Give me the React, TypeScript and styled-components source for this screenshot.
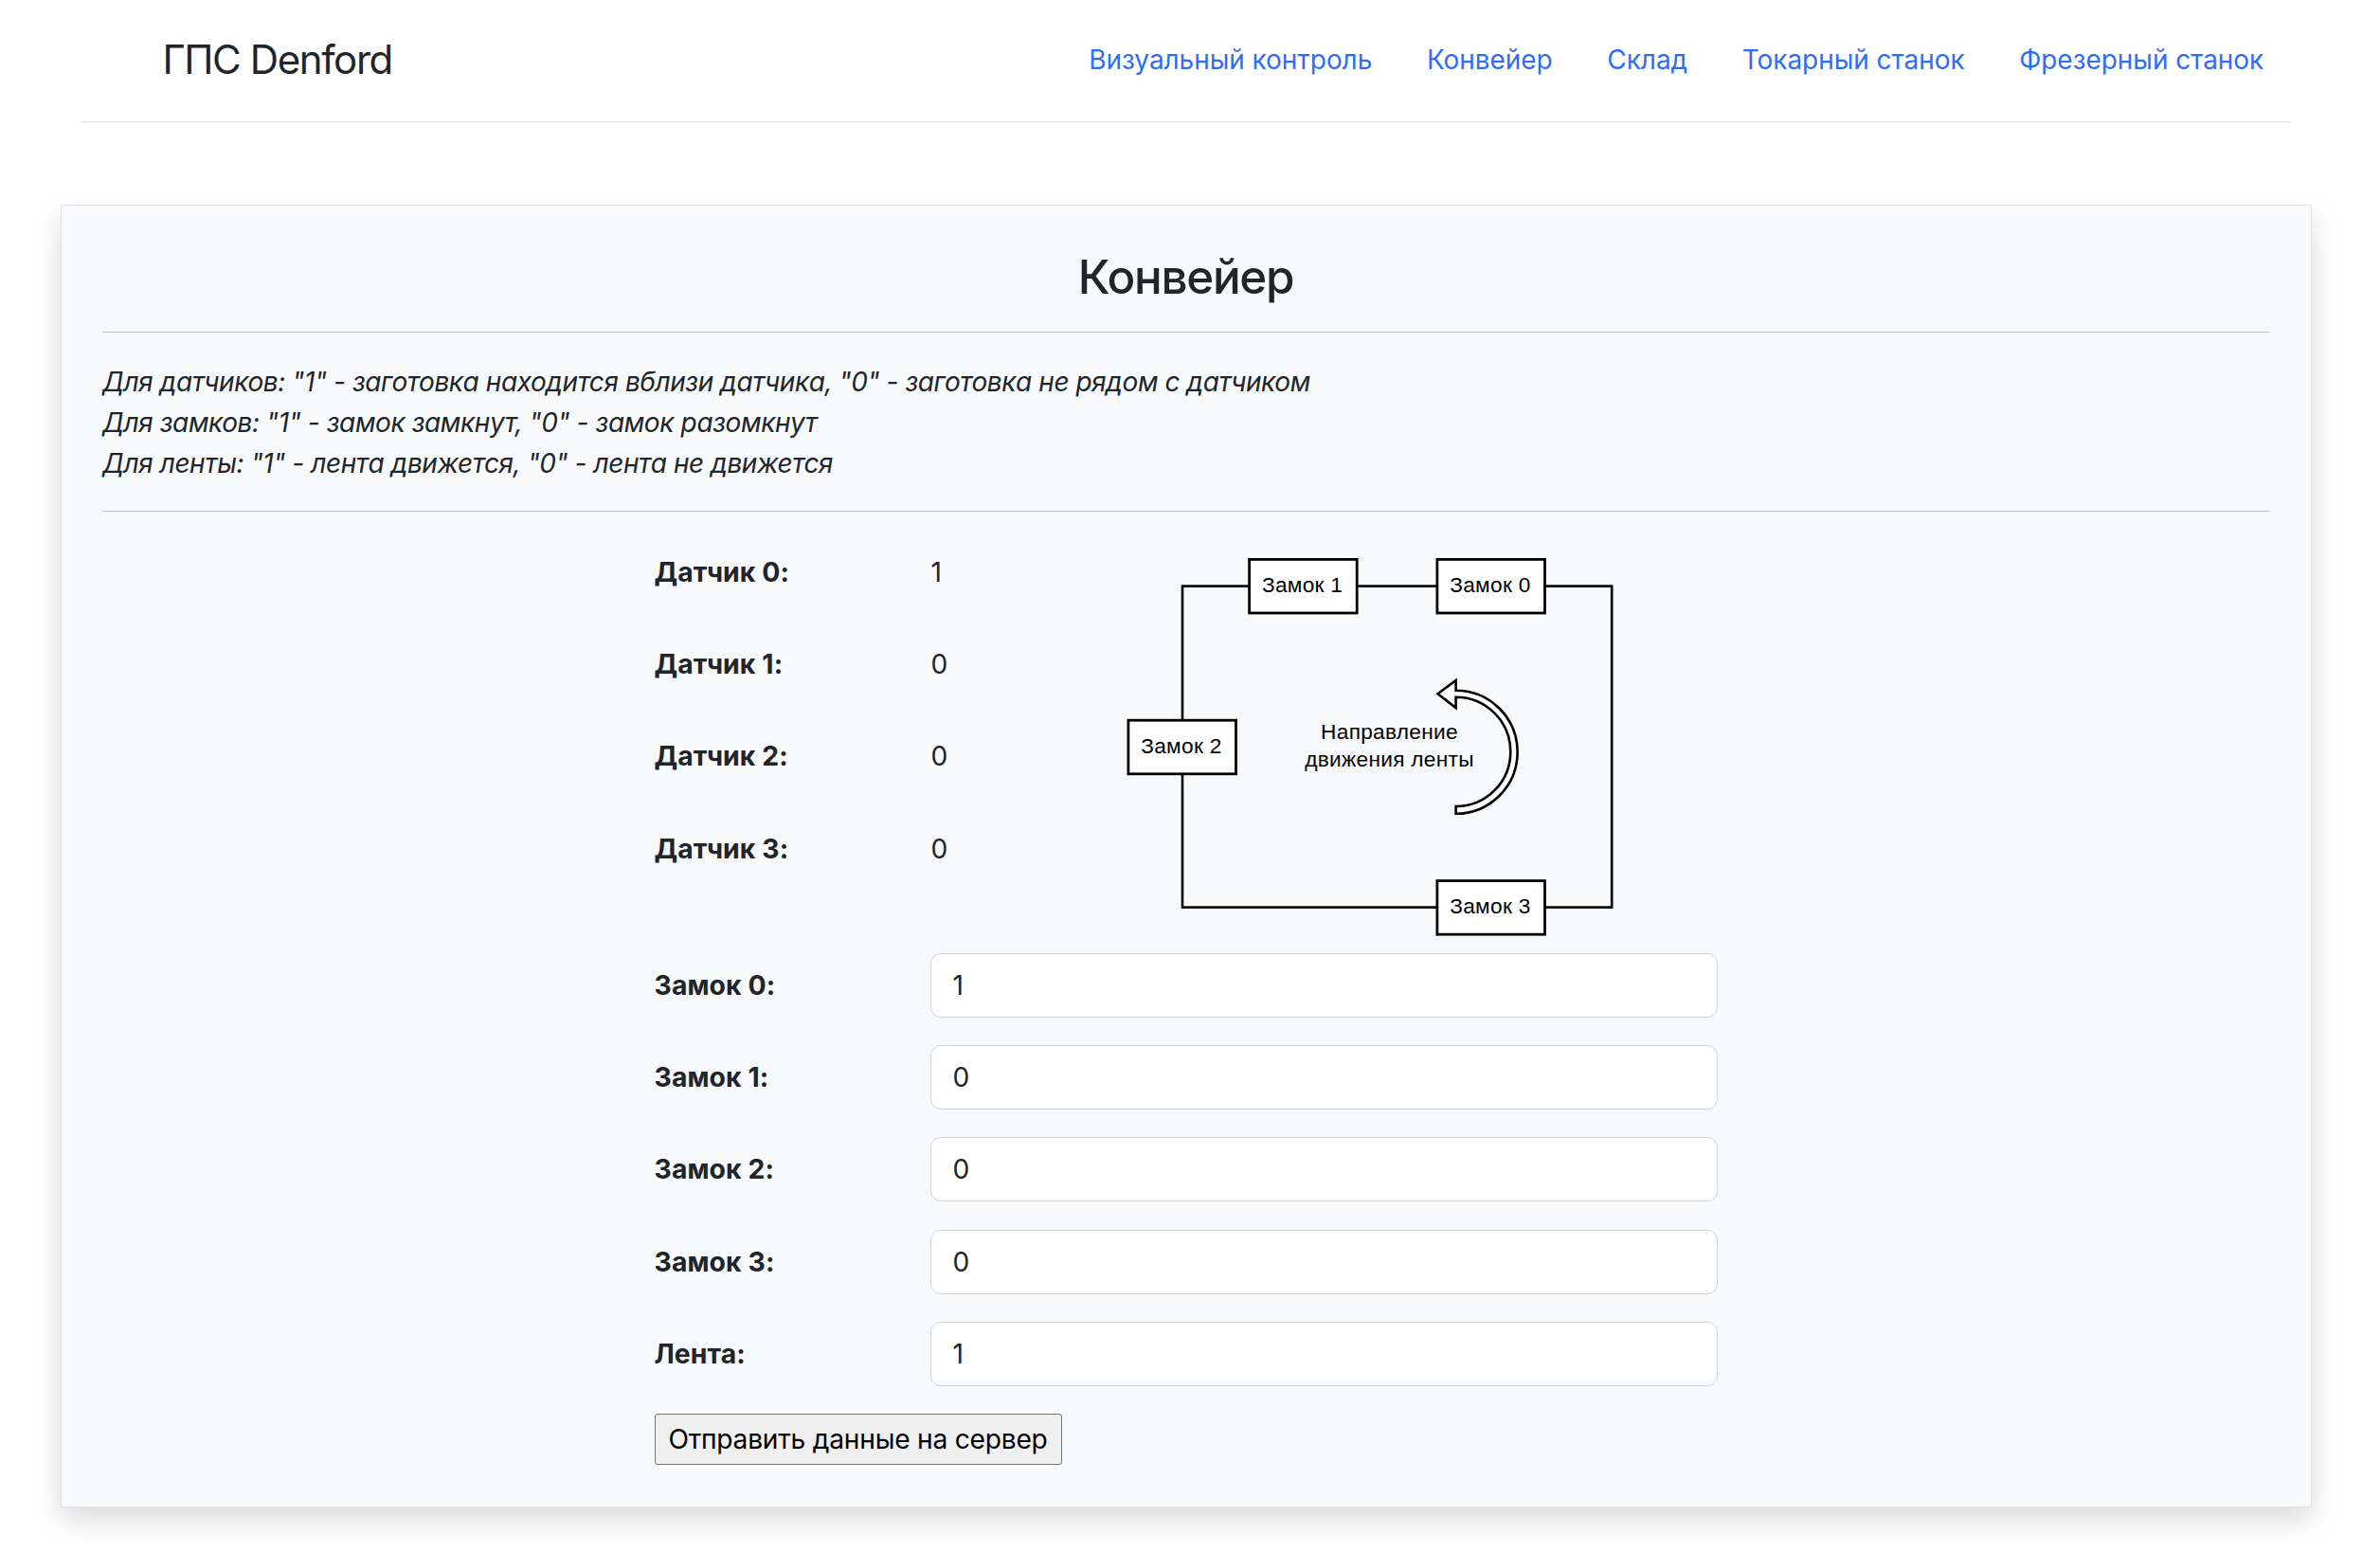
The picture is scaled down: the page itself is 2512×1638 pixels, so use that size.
import React, { useState } from 'react';
import styled, { createGlobalStyle } from 'styled-components';

const GlobalStyle = createGlobalStyle`
  *, *::before, *::after { box-sizing: border-box; }
  html { font-size: 28.8px; }
  body {
    margin: 0;
    background: #fff;
    color: #212529;
    font-family: Inter, "Liberation Sans", sans-serif;
    font-size: 1rem;
    line-height: 1.5;
  }
`;

const Page = styled.div`
  display: flex;
  flex-direction: column;
  min-height: 1638px;
`;

const Header = styled.header`
  display: flex;
  align-items: center;
  justify-content: space-between;
  height: 129px;
  margin: 0 94px 87px 86px;
  padding: 0 0 3px 85.4px;
  border-bottom: 1px solid #dee2e6;
`;

const Brand = styled.a`
  color: #212529;
  font-size: 42px;
  letter-spacing: -1.4px;
  text-decoration: none;
`;

const Nav = styled.nav`
  display: flex;
  padding-top: 3px;
`;

const NavLink = styled.a`
  padding: 14.4px 28.8px;
  color: #2f6df6;
  font-size: 28px;
  letter-spacing: -0.05px;
  line-height: 43.2px;
  text-decoration: none;
  white-space: nowrap;
`;

const Card = styled.main`
  width: 2376px;
  height: 1375px;
  margin-left: 64px;
  padding: 43px 44px 43px 43px;
  border: 1px solid #dee2e6;
  background: #f8f9fb;
  box-shadow: 0 14.4px 28.8px rgba(0, 0, 0, 0.15);
`;

const Title = styled.h3`
  height: 61px;
  margin: 0 0 29px;
  padding-top: 2px;
  font-size: 49.4px;
  font-weight: 540;
  letter-spacing: -1.3px;
  line-height: 60px;
  text-align: center;
`;

const Rule = styled.hr`
  height: 1px;
  margin: 0;
  border: 0;
  background: #bfc2c5;
`;

const Notes = styled.div`
  height: 188px;
  padding-top: 31px;
  font-size: 28px;
  font-style: italic;
  letter-spacing: -0.42px;
  line-height: 43.2px;
`;

const Form = styled.form`
  display: flex;
  flex-direction: column;
  width: 1122px;
  margin: 30px auto 0;
`;

const Overview = styled.section`
  display: flex;
  height: 436px;
`;

const Readings = styled.div`
  width: 492px;
`;

const Field = styled.div`
  display: grid;
  grid-template-columns: 291px 1fr;
  align-items: center;
  height: 68.2px;
  margin-bottom: 29px;
`;

const Label = styled.label`
  padding-top: 0.6px;
  font-size: 28.4px;
  font-weight: 700;
  letter-spacing: 0.08px;
`;

const Reading = styled.span`
  padding: 0 0 0 1px;
  font-size: 28.2px;
`;

const Input = styled.input`
  width: 100%;
  height: 68px;
  padding: 0 23px;
  border: 1px solid #ced4da;
  border-radius: 10.8px;
  background: #fff;
  color: #212529;
  font: inherit;
  font-size: 28.2px;
`;

const Submit = styled.button`
  align-self: flex-start;
  width: 430px;
  height: 54px;
  padding: 0.6px 0 0;
  border: 1px solid #767676;
  border-radius: 3px;
  background: #efefef;
  color: #000;
  font: inherit;
  font-size: 28.2px;
  letter-spacing: -0.25px;
  white-space: nowrap;
`;

const Scheme = styled.svg`
  width: 520px;
  height: 404px;
  margin-top: 15px;
  font-family: "Liberation Sans", Arial, sans-serif;
  font-size: 22.7px;
  letter-spacing: 0.28px;
`;

const links = ['Визуальный контроль', 'Конвейер', 'Склад', 'Токарный станок', 'Фрезерный станок'];

const sensors = [
  { name: 'Датчик 0', value: 1 },
  { name: 'Датчик 1', value: 0 },
  { name: 'Датчик 2', value: 0 },
  { name: 'Датчик 3', value: 0 },
];

const initialControls = [
  { name: 'Замок 0', value: '1' },
  { name: 'Замок 1', value: '0' },
  { name: 'Замок 2', value: '0' },
  { name: 'Замок 3', value: '0' },
  { name: 'Лента', value: '1' },
];

const locks = [
  { name: 'Замок 1', x: 1318.6, y: 590.4 },
  { name: 'Замок 0', x: 1516.9, y: 590.4 },
  { name: 'Замок 2', x: 1190.9, y: 760.2 },
  { name: 'Замок 3', x: 1516.9, y: 929.6 },
];

function ConveyorScheme() {
  return (
    <Scheme viewBox="1183 585 520 404" role="img" aria-label="Схема конвейера">
      <rect x="1248" y="618.6" width="453.2" height="339" fill="none" stroke="#000" strokeWidth="2.6" />
      {locks.map((lock) => (
        <g key={lock.name}>
          <rect x={lock.x} y={lock.y} width="113.6" height="56.6" fill="#fff" stroke="#000" strokeWidth="2.8" />
          <text x={lock.x + 56} y={lock.y + 34.6} textAnchor="middle">{lock.name}</text>
        </g>
      ))}
      <text x="1466.5" y="780.3" textAnchor="middle">Направление</text>
      <text x="1466.5" y="808.5" textAnchor="middle">движения ленты</text>
      <path
        d="M1536.6 858.8 V851.1 A57.6 57.6 0 0 0 1536.6 735.7 V747 L1517.6 732.3 L1536.6 718 V728.7 A65 65 0 0 1 1536.6 858.8 Z"
        fill="#fff"
        stroke="#000"
        strokeWidth="2.6"
      />
    </Scheme>
  );
}

export default function App() {
  const [controls, setControls] = useState(initialControls);

  const update = (index: number, value: string) =>
    setControls(controls.map((item, i) => (i === index ? { ...item, value } : item)));

  return (
    <Page>
      <GlobalStyle />
      <Header>
        <Brand href="#">ГПС Denford</Brand>
        <Nav>
          {links.map((link) => (
            <NavLink key={link} href="#">{link}</NavLink>
          ))}
        </Nav>
      </Header>
      <Card>
        <Title>Конвейер</Title>
        <Rule />
        <Notes>
          <div>Для датчиков: "1" - заготовка находится вблизи датчика, "0" - заготовка не рядом с датчиком</div>
          <div>Для замков: "1" - замок замкнут, "0" - замок разомкнут</div>
          <div>Для ленты: "1" - лента движется, "0" - лента не движется</div>
        </Notes>
        <Rule />
        <Form onSubmit={(event) => event.preventDefault()}>
          <Overview>
            <Readings>
              {sensors.map((sensor) => (
                <Field key={sensor.name}>
                  <Label as="span">{sensor.name}:</Label>
                  <Reading>{sensor.value}</Reading>
                </Field>
              ))}
            </Readings>
            <ConveyorScheme />
          </Overview>
          {controls.map((control, index) => (
            <Field key={control.name}>
              <Label htmlFor={`control-${index}`}>{control.name}:</Label>
              <Input
                id={`control-${index}`}
                value={control.value}
                onChange={(event) => update(index, event.target.value)}
              />
            </Field>
          ))}
          <Submit type="submit">Отправить данные на сервер</Submit>
        </Form>
      </Card>
    </Page>
  );
}
